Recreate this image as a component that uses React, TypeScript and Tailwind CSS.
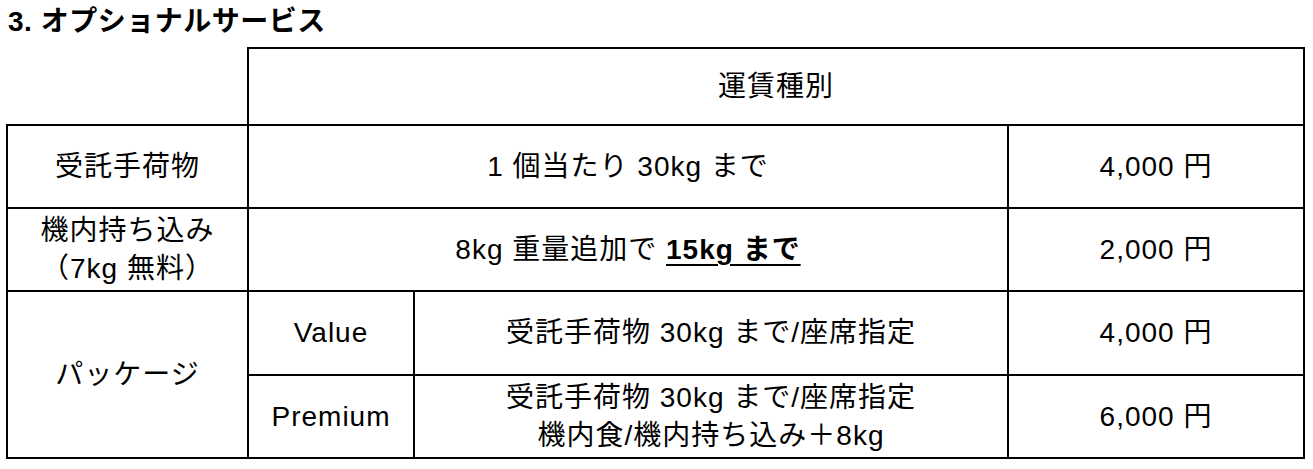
import React from 'react';

// 表のセル共通スタイル
const cell = 'border-2 border-black text-center align-middle p-0';

function Price({ value }: { value: string }) {
  return <td className={cell}>{value} 円</td>;
}

export default function App() {
  return (
    <main
      className="min-h-screen bg-white text-black"
      style={{ fontFamily: '"Liberation Sans", "Noto Sans CJK JP", sans-serif' }}
    >
      {/* 見出し */}
      <h2 className="h-[47px] pl-[8px] pt-[8px] text-[28px] font-bold leading-[28px] tracking-[0.5px]">
        3. オプショナルサービス
      </h2>

      {/* 料金表 */}
      <table className="ml-[6px] w-[1297px] table-fixed border-collapse text-[28px] leading-[38px] tracking-[1px]">
        <colgroup>
          <col className="w-[241px]" />
          <col className="w-[166px]" />
          <col className="w-[594px]" />
          <col className="w-[296px]" />
        </colgroup>
        <tbody>
          <tr className="h-[77px]">
            <td className="border-0 p-0" />
            <td colSpan={3} className={cell}>
              運賃種別
            </td>
          </tr>

          <tr className="h-[83px]">
            <td className={cell}>受託手荷物</td>
            <td colSpan={2} className={cell}>
              1 個当たり 30kg まで
            </td>
            <Price value="4,000" />
          </tr>

          <tr className="h-[83px]">
            <td className={cell}>
              機内持ち込み
              <br />
              （7kg 無料）
            </td>
            <td colSpan={2} className={cell}>
              8kg 重量追加で{' '}
              <span className="font-bold underline decoration-2 underline-offset-[5px]">
                15kg まで
              </span>
            </td>
            <Price value="2,000" />
          </tr>

          <tr className="h-[84px]">
            <td rowSpan={2} className={cell}>
              パッケージ
            </td>
            <td className={cell}>Value</td>
            <td className={cell}>受託手荷物 30kg まで/座席指定</td>
            <Price value="4,000" />
          </tr>

          <tr className="h-[83px]">
            <td className={cell}>Premium</td>
            <td className={cell}>
              受託手荷物 30kg まで/座席指定
              <br />
              機内食/機内持ち込み＋8kg
            </td>
            <Price value="6,000" />
          </tr>
        </tbody>
      </table>
    </main>
  );
}
